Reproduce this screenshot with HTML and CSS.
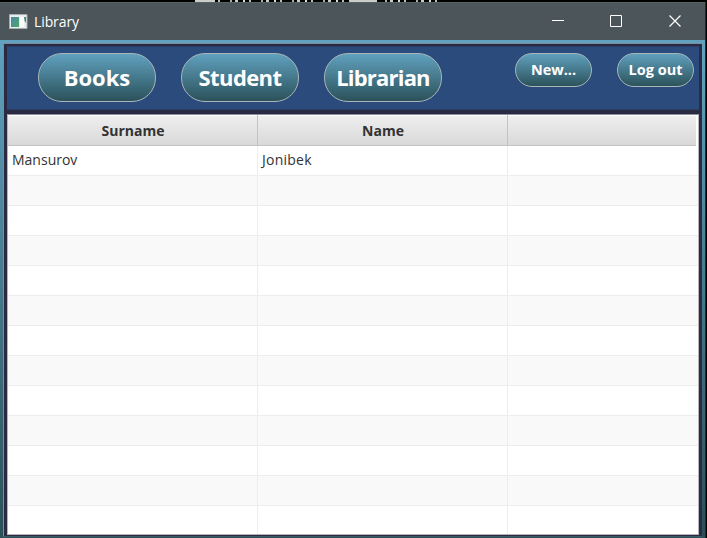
FILE: index.html
```
<!DOCTYPE html>
<html lang="en">
<head>
<meta charset="utf-8">
<title>Library</title>
<link rel="stylesheet" href="styles.css">
</head>
<body>
<div class="desktop-strip"></div>
<div class="window">
  <header class="titlebar">
    <svg class="app-icon" width="20" height="16" viewBox="0 0 20 16">
      <defs><linearGradient id="g" x1="0" y1="0" x2="1" y2="1"><stop offset="0" stop-color="#4a86a8"/><stop offset="1" stop-color="#4fa568"/></linearGradient></defs>
      <path d="M.5.5h17.500v14H.5z" fill="#e9eded" stroke="#a9adb0"/>
      <path d="M2 3h8v10H2z" fill="url(#g)"/>
      <path d="M11 3h4v10h-4z" fill="#fafafa"/>
      <path d="M15 3h2v6q-2-2-2-6z" fill="#3d8a78"/>
    </svg>
    <span class="title">Library</span>
    <svg class="controls" width="130" height="14" viewBox="0 0 130 14" fill="none" stroke="#fff">
      <path d="M0 5.500h12M58.500 .5h11v11h-11z"/>
      <path d="M117.500 .5l11 11M128.500 .5l-11 11" stroke-width="1.200"/>
    </svg>
  </header>
  <main class="client">
    <div class="panel">
      <nav class="toolbar">
        <div class="btn large"><span>Books</span></div>
        <div class="btn large"><span class="t-student">Student</span></div>
        <div class="btn large"><span class="t-librarian">Librarian</span></div>
        <div class="btn small new"><span>New...</span></div>
        <div class="btn small"><span>Log out</span></div>
      </nav>
      <section class="table">
        <div class="row head"><div>Surname</div><div>Name</div><div></div></div>
        <div class="row"><div>Mansurov</div><div class="t-jonibek">Jonibek</div><div></div></div>
        <div class="row"><div></div><div></div><div></div></div>
        <div class="row"><div></div><div></div><div></div></div>
        <div class="row"><div></div><div></div><div></div></div>
        <div class="row"><div></div><div></div><div></div></div>
        <div class="row"><div></div><div></div><div></div></div>
        <div class="row"><div></div><div></div><div></div></div>
        <div class="row"><div></div><div></div><div></div></div>
        <div class="row"><div></div><div></div><div></div></div>
        <div class="row"><div></div><div></div><div></div></div>
        <div class="row"><div></div><div></div><div></div></div>
        <div class="row"><div></div><div></div><div></div></div>
        <div class="row"><div></div><div></div><div></div></div>
      </section>
    </div>
  </main>
</div>
</body>
</html>
```
FILE: styles.css
```
* { box-sizing: border-box; }
body {
  margin: 0;
  width: 707px;
  height: 538px;
  overflow: hidden;
  background: #000;
  font-family: "Open Sans", "Noto Sans", sans-serif;
  font-size: 14px;
}
.desktop-strip {
  height: 2px;
  margin: 0 262px 0 193px;
  background:
    linear-gradient(#ccc, #ccc) 2px 0 / 20px 2px no-repeat,
    linear-gradient(#ccc, #ccc) 156px 0 / 28px 2px no-repeat,
    repeating-linear-gradient(90deg, #000 0 6px, #aaa 6px 8px, #000 8px 11px, #ccc 11px 14px, #000 14px 19px, #ddd 19px 21px, #000 21px 25px, #bbb 25px 27px, #000 27px 31px);
}
.window { width: 706px; height: 536px; border-right: 1px solid #202b30; }
.titlebar {
  height: 38px;
  display: flex;
  align-items: center;
  background: #4c555a;
  border-top: 1px solid #55645f;
  color: #fff;
  padding-left: 9px;
}
.title { margin-left: 5px; letter-spacing: -.1px; }
.controls { margin-left: auto; margin-right: 23px; }
.client {
  height: 498px;
  padding: 3px 3px 0;
  background: linear-gradient(#61a2c0, #2a5058);
}
.panel {
  height: 494px;
  border: 1px solid rgba(190, 220, 230, .55);
  border-right: 0;
  border-bottom: 1px solid #3c5968;
  background: #2a2a42;
  padding: 2px 3px;
}
.toolbar {
  height: 64px;
  display: flex;
  align-items: flex-start;
  padding: 6px 5px 0 31px;
  gap: 25px;
  background: #2a4b7c;
  border: 1px solid #2a3e68;
  border-left: 0;
  border-right: 0;
}
.btn {
  display: flex;
  align-items: center;
  justify-content: center;
  padding-bottom: 2px;
  border: 1.500px solid #a9b5b9;
  background: linear-gradient(#61a2c0, #2a5058);
  background-origin: border-box;
  color: #fff;
  font-weight: 700;
  white-space: nowrap;
}
.large { width: 118px; height: 49px; border-radius: 24px; font-size: 22px; }
.small { width: 77px; height: 34px; border-radius: 17px; font-size: 14.500px; }
.new { margin-left: auto; }
.t-student { letter-spacing: -.6px; }
.t-librarian { letter-spacing: -.8px; }
.t-jonibek { letter-spacing: .25px; }
.table {
  height: 421px;
  margin-top: 4px;
  background: #fff;
  border: 1px solid #b5b5b9;
  border-top-color: #8c8c9c;
  overflow: hidden;
  color: #333;
}
.row {
  display: grid;
  grid-template-columns: 250px 250px 1fr;
  height: 30px;
  border-bottom: 1px solid #ededed;
}
.row > div { display: flex; align-items: center; padding: 0 0 2px 4px; border-right: 1px solid #ededed; }
.row > div:last-child { border-right: 0; }
.row:nth-child(odd) { background: #f9f9f9; }
.row.head {
  height: 31px;
  margin-right: 2px;
  font-weight: 700;
  background: linear-gradient(#efefef, #d9d9d9);
  border-bottom-color: #c3c3c3;
  box-shadow: inset 0 1px #fff;
}
.row.head > div { justify-content: center; padding: 0 0 0 1px; border-color: #c3c3c3; }
```
